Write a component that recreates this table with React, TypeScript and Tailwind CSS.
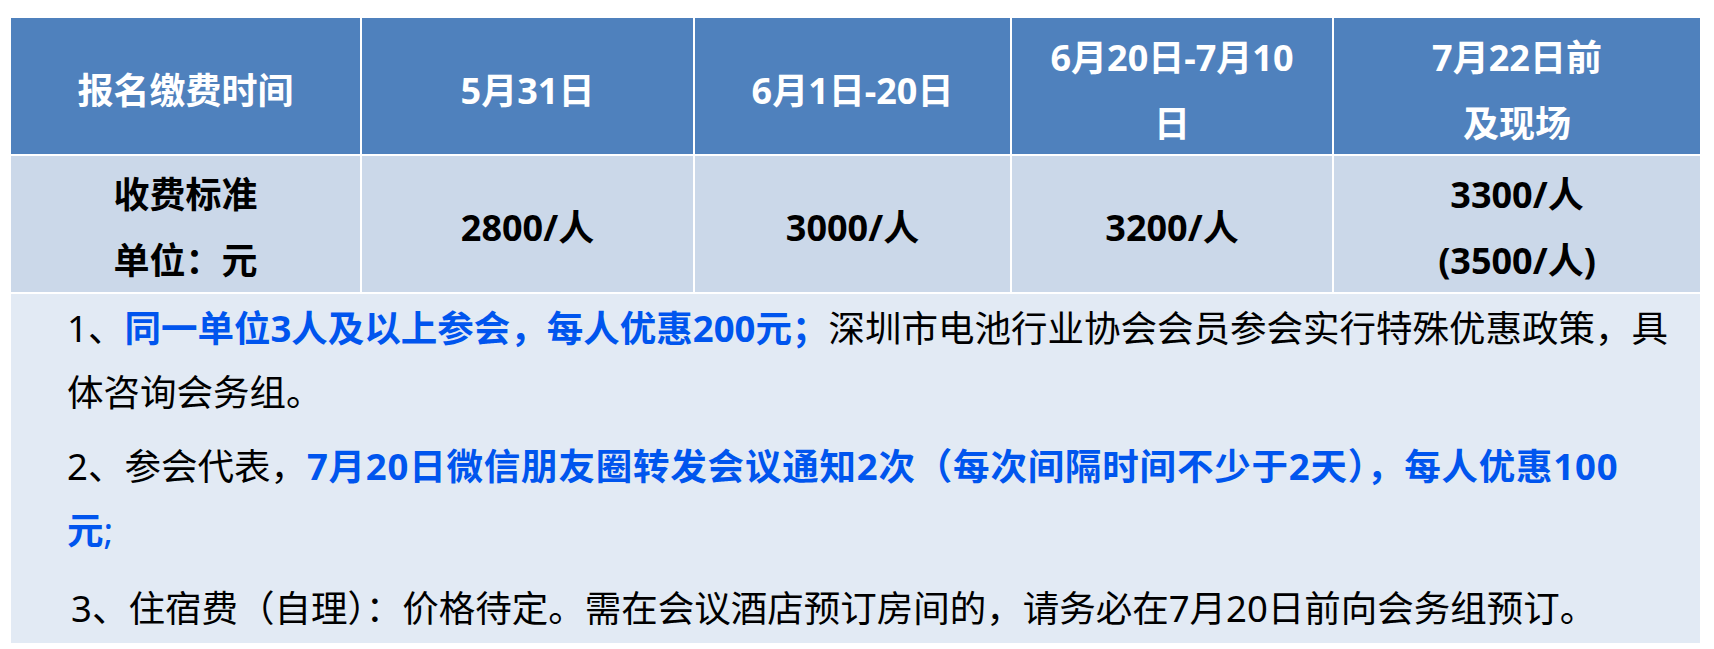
import React from 'react'

const font = "font-['Noto_Sans','Noto_Sans_CJK_SC',sans-serif]"

function HeadCell({ children }: { children: React.ReactNode }) {
  return (
    <div className="flex items-center justify-center bg-[#4f81bd] pt-[10px] text-center text-[36px] font-bold leading-[66px] text-white">
      <div>{children}</div>
    </div>
  )
}

function PriceCell({ children }: { children: React.ReactNode }) {
  return (
    <div className="flex items-center justify-center bg-[#cbd8e9] pt-[8px] text-center text-[36px] font-bold leading-[66px] text-black">
      <div>{children}</div>
    </div>
  )
}

export default function App() {
  return (
    <div className={`min-h-screen bg-white pt-[18px] pl-[11px] ${font}`}>
      <div className="w-[1689px]">
        {/* Price table */}
        <div className="grid grid-cols-[349px_331px_315px_320px_366px] grid-rows-[136px_136px] gap-[2px] bg-white">
          <HeadCell>报名缴费时间</HeadCell>
          <HeadCell>5月31日</HeadCell>
          <HeadCell>6月1日-20日</HeadCell>
          <HeadCell>
            6月20日-7月10
            <br />
            日
          </HeadCell>
          <HeadCell>
            7月22日前
            <br />
            及现场
          </HeadCell>

          <PriceCell>
            收费标准
            <br />
            单位：元
          </PriceCell>
          <PriceCell>2800/人</PriceCell>
          <PriceCell>3000/人</PriceCell>
          <PriceCell>3200/人</PriceCell>
          <PriceCell>
            3300/人
            <br />
            (3500/人)
          </PriceCell>
        </div>

        {/* Notes */}
        <div className="mt-[2px] h-[349px] bg-[#e2eaf4] pt-[2px] pl-[56px] text-[36.5px] leading-[64px] text-black whitespace-nowrap">
          <p>
            1、<span className="font-bold text-[#0055ee]">同一单位3人及以上参会，每人优惠200元；</span>
            深圳市电池行业协会会员参会实行特殊优惠政策，具
            <br />
            体咨询会务组。
          </p>
          <p className="mt-[10px]">
            2、参会代表，
            <span className="font-bold tracking-[0.8px] text-[#0055ee]">
              7月20日微信朋友圈转发会议通知2次（每次间隔时间不少于2天），每人优惠100
            </span>
            <br />
            <span className="font-bold text-[#0055ee]">元</span>
            <span className="text-[#0055ee]">;</span>
          </p>
          <p className="mt-[14px] pl-[4px]">
            3、住宿费（自理）：价格待定。需在会议酒店预订房间的，请务必在7月20日前向会务组预订。
          </p>
        </div>
      </div>
    </div>
  )
}
